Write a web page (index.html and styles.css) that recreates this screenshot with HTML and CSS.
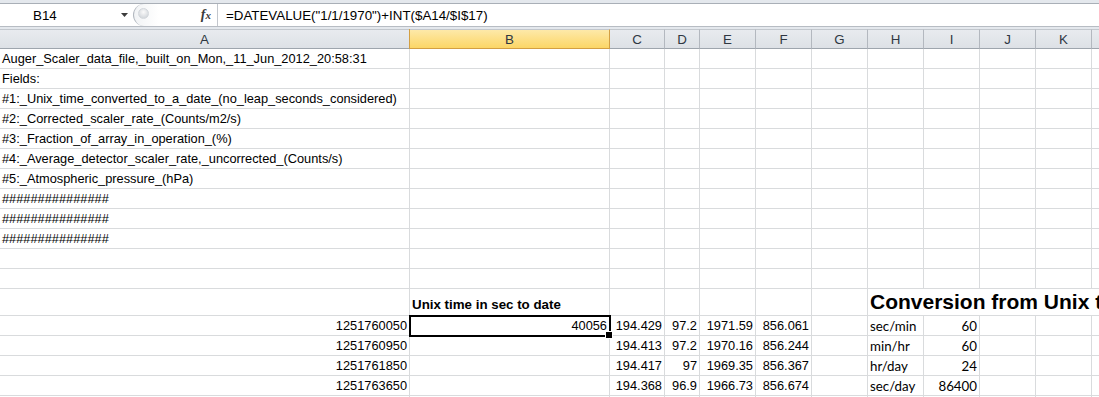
FILE: index.html
```html
<!DOCTYPE html>
<html lang="en">
<head>
  <meta charset="UTF-8">
  <title>Auger Scaler data - Excel</title>
  <link rel="stylesheet" href="styles.css">
</head>
<body>
  <div class="toolbar">
    <div class="formula-bar">
      <div class="name-box">
        B14
        <svg class="drop" width="7" height="4" viewBox="0 0 7 4"><path d="M0 0h7L3.5 4z" fill="#3c3c3c"/></svg>
      </div>
      <div class="grip">
        <span class="knob"></span>
        <span class="fx">f<span>x</span></span>
      </div>
      <div class="formula">=DATEVALUE("1/1/1970")+INT($A14/$I$17)</div>
    </div>
  </div>

  <table class="sheet">
    <colgroup>
      <col class="w-a"><col class="w-b"><col class="w-c"><col class="w-d">
      <col class="w-x"><col class="w-x"><col class="w-x"><col class="w-x">
      <col class="w-x"><col class="w-x"><col class="w-x"><col class="w-rest">
    </colgroup>
    <thead>
      <tr>
        <th>A</th><th class="sel">B</th><th>C</th><th>D</th><th>E</th><th>F</th>
        <th>G</th><th>H</th><th>I</th><th>J</th><th>K</th><th></th>
      </tr>
    </thead>
    <tbody>
      <tr><td>Auger_Scaler_data_file,_built_on_Mon,_11_Jun_2012_20:58:31</td><td></td><td></td><td></td><td></td><td></td><td></td><td></td><td></td><td></td><td></td><td></td></tr>
      <tr><td>Fields:</td><td></td><td></td><td></td><td></td><td></td><td></td><td></td><td></td><td></td><td></td><td></td></tr>
      <tr><td>#1:_Unix_time_converted_to_a_date_(no_leap_seconds_considered)</td><td></td><td></td><td></td><td></td><td></td><td></td><td></td><td></td><td></td><td></td><td></td></tr>
      <tr><td>#2:_Corrected_scaler_rate_(Counts/m2/s)</td><td></td><td></td><td></td><td></td><td></td><td></td><td></td><td></td><td></td><td></td><td></td></tr>
      <tr><td>#3:_Fraction_of_array_in_operation_(%)</td><td></td><td></td><td></td><td></td><td></td><td></td><td></td><td></td><td></td><td></td><td></td></tr>
      <tr><td>#4:_Average_detector_scaler_rate,_uncorrected_(Counts/s)</td><td></td><td></td><td></td><td></td><td></td><td></td><td></td><td></td><td></td><td></td><td></td></tr>
      <tr><td>#5:_Atmospheric_pressure_(hPa)</td><td></td><td></td><td></td><td></td><td></td><td></td><td></td><td></td><td></td><td></td><td></td></tr>
      <tr><td>###############</td><td></td><td></td><td></td><td></td><td></td><td></td><td></td><td></td><td></td><td></td><td></td></tr>
      <tr><td>###############</td><td></td><td></td><td></td><td></td><td></td><td></td><td></td><td></td><td></td><td></td><td></td></tr>
      <tr><td>###############</td><td></td><td></td><td></td><td></td><td></td><td></td><td></td><td></td><td></td><td></td><td></td></tr>
      <tr><td></td><td></td><td></td><td></td><td></td><td></td><td></td><td></td><td></td><td></td><td></td><td></td></tr>
      <tr><td></td><td></td><td></td><td></td><td></td><td></td><td></td><td></td><td></td><td></td><td></td><td></td></tr>
      <tr class="tall">
        <td></td><td class="b">Unix time in sec to date</td><td></td><td></td><td></td><td></td><td></td>
        <td class="title" colspan="5">Conversion from Unix time</td>
      </tr>
      <tr>
        <td class="n">1251760050</td><td class="n current">40056</td><td class="n">194.429</td><td class="n">97.2</td><td class="n">1971.59</td><td class="n">856.061</td><td></td>
        <td class="c">sec/min</td><td class="c n">60</td><td></td><td></td><td></td>
      </tr>
      <tr>
        <td class="n">1251760950</td><td></td><td class="n">194.413</td><td class="n">97.2</td><td class="n">1970.16</td><td class="n">856.244</td><td></td>
        <td class="c">min/hr</td><td class="c n">60</td><td></td><td></td><td></td>
      </tr>
      <tr>
        <td class="n">1251761850</td><td></td><td class="n">194.417</td><td class="n">97</td><td class="n">1969.35</td><td class="n">856.367</td><td></td>
        <td class="c">hr/day</td><td class="c n">24</td><td></td><td></td><td></td>
      </tr>
      <tr>
        <td class="n">1251763650</td><td></td><td class="n">194.368</td><td class="n">96.9</td><td class="n">1966.73</td><td class="n">856.674</td><td></td>
        <td class="c">sec/day</td><td class="c n">86400</td><td></td><td></td><td></td>
      </tr>
      <tr><td></td><td></td><td></td><td></td><td></td><td></td><td></td><td></td><td></td><td></td><td></td><td></td></tr>
    </tbody>
  </table>
</body>
</html>
```

FILE: styles.css
```css
* {
  box-sizing: border-box;
}
body {
  margin: 0;
  background: #fff;
  font-family: "Liberation Sans", Arial, sans-serif;
  font-size: 13.33px;
  color: #000;
  overflow: hidden;
}

/* formula bar */
.toolbar {
  background: #e4e8ed;
  padding: 3px 0 2px;
}
.formula-bar {
  display: flex;
  height: 24px;
  background: #fff;
  border-top: 1px solid #a9afb7;
  border-bottom: 1px solid #b7bcc3;
}
.name-box {
  position: relative;
  width: 133px;
  padding: 1px 0 0 33px;
  line-height: 21px;
}
.drop {
  position: absolute;
  left: 121px;
  top: 9px;
}
.grip {
  display: flex;
  align-items: flex-start;
  width: 85px;
  border-left: 1px solid #b0b6be;
  border-right: 1px solid #c3c7cd;
  border-radius: 12px 0 0 12px;
  background: linear-gradient(90deg, #f1f3f5, #fff 30%);
}
.knob {
  width: 11px;
  height: 11px;
  margin: 4px 0 0 4px;
  border-radius: 50%;
  border: 1px solid #d3d7dc;
  background: radial-gradient(circle at 50% 35%, #fafafa, #c9ced4);
}
.fx {
  margin: 0 6px 0 auto;
  font-family: "Liberation Serif", serif;
  font-style: italic;
  font-weight: bold;
  font-size: 14px;
  line-height: 21px;
  color: #3a3a3a;
}
.fx span {
  font-size: 11px;
}
.formula {
  padding: 1px 0 0 8px;
  line-height: 21px;
  white-space: nowrap;
}

/* grid */
.sheet {
  border-collapse: separate;
  border-spacing: 0;
  table-layout: fixed;
  width: 1100px;
}
.w-a { width: 410px; }
.w-b { width: 200px; }
.w-c { width: 55px; }
.w-d { width: 35px; }
.w-x { width: 56px; }
.w-rest { width: 8px; }

.sheet th {
  height: 18px;
  padding: 0;
  font-weight: normal;
  line-height: 17px;
  color: #2f3742;
  background: linear-gradient(#e8ebef, #dde1e6);
  border-top: 1px solid #c2c7cd;
  border-right: 1px solid #b3b8bf;
  border-bottom: 1px solid #9ea5ad;
}
.sheet th.sel {
  background: linear-gradient(#fde9a9, #fcd666);
  border-right-color: #d39f42;
  border-bottom-color: #d39f42;
  box-shadow: -1px 0 0 #d39f42;
}
.sheet tr {
  height: 20px;
}
.sheet td {
  padding: 1px 2px 0;
  font-size: 12.8px;
  line-height: 18px;
  vertical-align: bottom;
  white-space: nowrap;
  overflow: hidden;
  border-right: 1px solid #d9dbdd;
  border-bottom: 1px solid #d9dbdd;
}
.sheet tr.tall {
  height: 27px;
}
.sheet tr.tall td {
  vertical-align: baseline;
}
.sheet td.b {
  font-size: 13.33px;
  font-weight: bold;
}
.sheet td.title {
  font-size: 21px;
  font-weight: bold;
  line-height: 24px;
}
.sheet td.n {
  text-align: right;
}
.sheet td.c {
  font-family: Lato, "Open Sans", sans-serif;
  font-size: 13.3px;
}
.sheet td.current {
  position: relative;
  overflow: visible;
  outline: 2px solid #000;
  outline-offset: -1px;
}
.sheet td.current::after {
  content: "";
  position: absolute;
  right: -4px;
  bottom: -4px;
  width: 6px;
  height: 6px;
  background: #000;
  border: 1px solid #fff;
}
```
